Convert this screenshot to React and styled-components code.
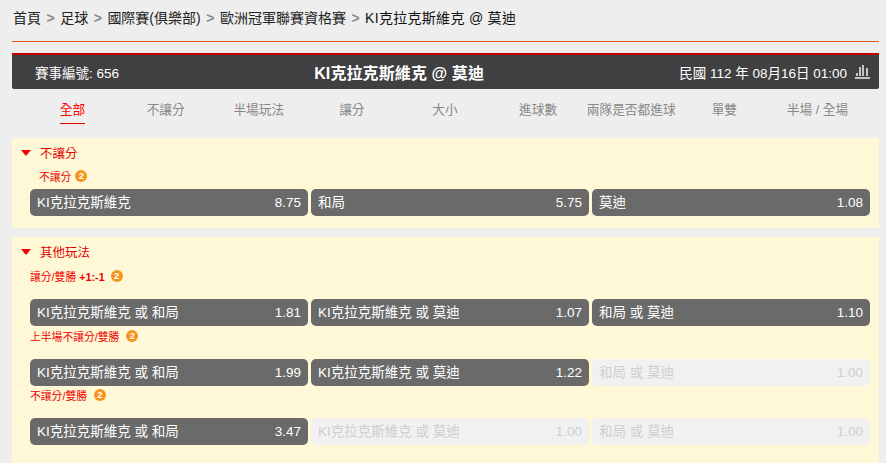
import React from 'react'
import styled, { createGlobalStyle } from 'styled-components'

const GlobalStyle = createGlobalStyle`
    html, body {
        margin: 0;
        padding: 0;
        background: #eeeeee;
        font-family: "Liberation Sans", Arial, "Noto Sans CJK TC", sans-serif;
    }
`

const Page = styled.div`
    width: 867px;
    height: 463px;
    margin-left: 12px;
    overflow: hidden;
`

const Breadcrumb = styled.div`
    height: 42px;
    box-sizing: border-box;
    padding: 10px 0 0 1px;
    line-height: 17px;
    font-size: 14px;
    color: #222;
    border-bottom: 1px solid #df5a1c;
    display: flex;
    gap: 5.5px;
`

const Crumb = styled.span`
    color: ${props => (props.$last ? '#111' : '#222')};
    letter-spacing: ${props => (props.$last ? '0.3px' : '0')};
`

const Sep = styled.span`
    color: #888;
    font-weight: bold;
`

const Header = styled.div`
    margin-top: 11px;
    height: 36px;
    box-sizing: border-box;
    border-top: 2px solid #c00000;
    border-radius: 0 0 2px 2px;
    background: #404042;
    color: #fff;
    display: flex;
    justify-content: space-between;
    align-items: center;
    padding: 0 9px 0 23px;
    font-size: 13.5px;
`

const MatchTitle = styled.div`
    font-size: 16px;
    font-weight: bold;
    letter-spacing: 0.1px;
`

const HeaderRight = styled.div`
    display: flex;
    align-items: center;
    gap: 8px;
`

const Tabs = styled.div`
    display: grid;
    grid-template-columns: repeat(9, 1fr);
    width: 838px;
    margin-left: 14px;
    height: 49px;
`

const Tab = styled.div`
    justify-self: center;
    height: 34px;
    line-height: 42px;
    font-size: 12.7px;
    white-space: nowrap;
    color: ${props => (props.$active ? '#ff0000' : '#888')};
    border-bottom: ${props => (props.$active ? '1px solid #e00000' : 'none')};
`

const Section = styled.div`
    background: #fff8d6;
    padding: 0 9px 12px 18px;
    margin-bottom: 9px;
    height: ${props => props.$height}px;
    box-sizing: border-box;
`

const SectionHead = styled.div`
    display: flex;
    align-items: center;
    gap: 9px;
    height: 30px;
    box-sizing: border-box;
    padding: 0 0 2px 3px;
    margin-left: -12px;
    color: #e00000;
    font-size: 12.5px;
`

const Arrow = styled.span`
    width: 0;
    height: 0;
    margin-top: 2px;
    border-left: 5.5px solid transparent;
    border-right: 5.5px solid transparent;
    border-top: 6px solid #f00000;
`

const MarketLabel = styled.div`
    display: flex;
    align-items: center;
    box-sizing: border-box;
    gap: ${props => props.$gap}px;
    height: ${props => props.$height}px;
    padding-bottom: ${props => props.$below}px;
    margin-left: ${props => props.$indent}px;
    color: #f00000;
    font-size: 10.8px;
`

const Strong = styled.b`
    font-weight: bold;
`

const Badge = styled.span`
    width: 12px;
    height: 12px;
    border-radius: 50%;
    background: #f5951e;
    color: #fff;
    font-size: 9.5px;
    font-weight: bold;
    line-height: 12px;
    text-align: center;
`

const Row = styled.div`
    display: grid;
    grid-template-columns: repeat(3, 278px);
    column-gap: 3px;
`

const OddButton = styled.div`
    height: 27px;
    box-sizing: border-box;
    border-radius: 5px;
    padding: 0 7px;
    display: flex;
    justify-content: space-between;
    align-items: center;
    font-size: 13.5px;
    background: ${props => (props.$off ? '#f1f1f1' : '#6a6a6a')};
    color: ${props => (props.$off ? '#cfcfcf' : '#fff')};
`

const OddName = styled.span`
    padding-bottom: 3px;
`

const OddValue = styled.span`
    padding-bottom: 1px;
`

const ChartIcon = () => (
    <svg width="15" height="14" viewBox="0 0 15 14" fill="#c4c4c4">
        <rect x="0" y="12" width="15" height="2" />
        <rect x="1" y="8" width="2" height="3" />
        <rect x="4" y="2" width="2" height="9" />
        <rect x="7" y="0" width="2" height="11" />
        <rect x="11" y="3" width="2" height="8" />
    </svg>
)

const Odd = ({ name, value, off }) => (
    <OddButton $off={off}>
        <OddName>{name}</OddName>
        <OddValue>{value}</OddValue>
    </OddButton>
)

const tabs = ['全部', '不讓分', '半場玩法', '讓分', '大小', '進球數', '兩隊是否都進球', '單雙', '半場 / 全場']
const crumbs = ['首頁', '足球', '國際賽(俱樂部)', '歐洲冠軍聯賽資格賽', 'KI克拉克斯維克 @ 莫迪']

const App = () => (
    <Page>
        <GlobalStyle />
        <Breadcrumb>
            {crumbs.map((crumb, i) => (
                <React.Fragment key={crumb}>
                    {i > 0 && <Sep>&gt;</Sep>}
                    <Crumb $last={i === crumbs.length - 1}>{crumb}</Crumb>
                </React.Fragment>
            ))}
        </Breadcrumb>
        <Header>
            <div>賽事編號: 656</div>
            <MatchTitle>KI克拉克斯維克 @ 莫迪</MatchTitle>
            <HeaderRight>
                民國 112 年 08月16日 01:00
                <ChartIcon />
            </HeaderRight>
        </Header>
        <Tabs>
            {tabs.map((tab, i) => (
                <Tab key={tab} $active={i === 0}>{tab}</Tab>
            ))}
        </Tabs>
        <Section $height={90}>
            <SectionHead><Arrow />不讓分</SectionHead>
            <MarketLabel $indent={9} $gap={4} $height={21} $below={5}><span>不讓分</span><Badge>2</Badge></MarketLabel>
            <Row>
                <Odd name="KI克拉克斯維克" value="8.75" />
                <Odd name="和局" value="5.75" />
                <Odd name="莫迪" value="1.08" />
            </Row>
        </Section>
        <Section $height={226}>
            <SectionHead><Arrow />其他玩法</SectionHead>
            <MarketLabel $indent={0} $gap={6} $height={32} $below={14}><span>讓分/雙勝 <Strong>+1:-1</Strong></span><Badge>2</Badge></MarketLabel>
            <Row>
                <Odd name="KI克拉克斯維克 或 和局" value="1.81" />
                <Odd name="KI克拉克斯維克 或 莫迪" value="1.07" />
                <Odd name="和局 或 莫迪" value="1.10" />
            </Row>
            <MarketLabel $indent={0} $gap={7} $height={33} $below={13}><span>上半場不讓分/雙勝</span><Badge>2</Badge></MarketLabel>
            <Row>
                <Odd name="KI克拉克斯維克 或 和局" value="1.99" />
                <Odd name="KI克拉克斯維克 或 莫迪" value="1.22" />
                <Odd name="和局 或 莫迪" value="1.00" off />
            </Row>
            <MarketLabel $indent={0} $gap={7} $height={32} $below={14}><span>不讓分/雙勝</span><Badge>2</Badge></MarketLabel>
            <Row>
                <Odd name="KI克拉克斯維克 或 和局" value="3.47" />
                <Odd name="KI克拉克斯維克 或 莫迪" value="1.00" off />
                <Odd name="和局 或 莫迪" value="1.00" off />
            </Row>
        </Section>
    </Page>
)

export default App
